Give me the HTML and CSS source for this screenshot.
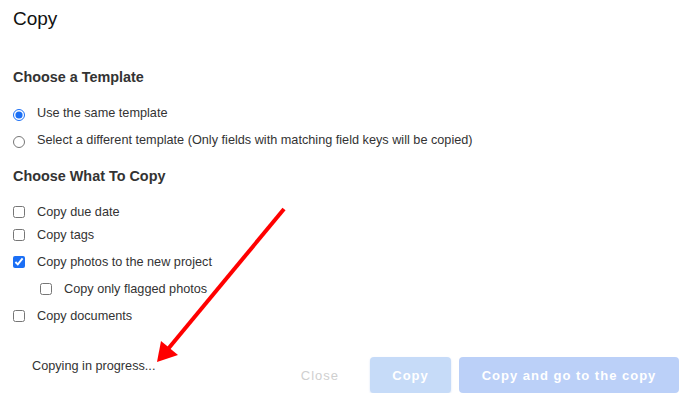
FILE: index.html
```html
<!DOCTYPE html>
<html lang="en">
<head>
  <meta charset="UTF-8">
  <title>Copy</title>
  <link rel="stylesheet" href="styles.css">
</head>
<body>
  <div class="dialog">
    <h1 class="titulo">Copy</h1>

    <h2 class="secao secao-template">Choose a Template</h2>
    <label class="opcao opcao-primeira">
      <input type="radio" name="template" checked>
      <span>Use the same template</span>
    </label>
    <label class="opcao">
      <input type="radio" name="template">
      <span>Select a different template (Only fields with matching field keys will be copied)</span>
    </label>

    <h2 class="secao">Choose What To Copy</h2>
    <label class="opcao opcao-primeira">
      <input type="checkbox">
      <span>Copy due date</span>
    </label>
    <label class="opcao opcao-junta">
      <input type="checkbox">
      <span>Copy tags</span>
    </label>
    <label class="opcao">
      <input type="checkbox" checked>
      <span>Copy photos to the new project</span>
    </label>
    <label class="opcao sub">
      <input type="checkbox">
      <span>Copy only flagged photos</span>
    </label>
    <label class="opcao">
      <input type="checkbox">
      <span>Copy documents</span>
    </label>

    <div class="rodape">
      <div class="progresso">Copying in progress...</div>
      <div class="botoes">
        <button class="btn-fechar" disabled>Close</button>
        <button class="btn btn-copiar" disabled>Copy</button>
        <button class="btn btn-ir" disabled>Copy and go to the copy</button>
      </div>
    </div>
  </div>

  <svg class="seta" width="700" height="402" viewBox="0 0 700 402">
    <line x1="284" y1="209" x2="168" y2="349" stroke="#ff0000" stroke-width="4" />
    <polygon points="157,362 161,341 178,355" fill="#ff0000" />
  </svg>
</body>
</html>
```

FILE: styles.css
```css
body {
  margin: 0;
  font-family: "Liberation Sans", Arial, sans-serif;
  background: #fff;
  color: #333;
}

.dialog {
  padding: 0 21px 0 13px;
}

.titulo {
  margin: 7px 0 0;
  font-size: 19px;
  line-height: 24px;
  font-weight: normal;
  color: #111;
}

.secao {
  margin: 18px 0 0;
  font-size: 14.4px;
  line-height: 18px;
  font-weight: bold;
  color: #333;
}

.secao-template {
  margin-top: 37px;
}

.opcao {
  display: flex;
  align-items: center;
  height: 18px;
  margin-top: 9px;
  font-size: 12.7px;
  color: #333;
}

.opcao-primeira { margin-top: 18px; }
.opcao-junta { margin-top: 5px; }

.opcao input {
  width: 12px;
  height: 12px;
  margin: 0 12px 0 0;
  accent-color: #1b6ff5;
}

.opcao input[type="radio"] {
  margin-top: 3px;
}

.sub {
  padding-left: 27px;
}

.rodape {
  display: flex;
  margin-top: 32px;
}

.progresso {
  padding-left: 19px;
  font-size: 12.7px;
  line-height: 18px;
  color: #333;
}

.botoes {
  display: flex;
  margin-left: auto;
}

.btn-fechar {
  border: none;
  background: none;
  padding: 0 31px 0 16px;
  font-family: inherit;
  font-size: 13px;
  letter-spacing: 1px;
  color: #cfcfcf;
  height: 36px;
}

.btn {
  height: 36px;
  border: none;
  border-radius: 4px;
  font-family: inherit;
  font-size: 13px;
  font-weight: bold;
  letter-spacing: 1px;
  color: #fff;
}

.btn-copiar {
  width: 81px;
  background: #c6dbf8;
  box-shadow: 0 1px 2px rgba(150, 180, 230, 0.4);
}

.btn-ir {
  width: 220px;
  margin-left: 8px;
  background: #bbd0f8;
}

.seta {
  position: absolute;
  top: 0;
  left: 0;
  pointer-events: none;
}
```
